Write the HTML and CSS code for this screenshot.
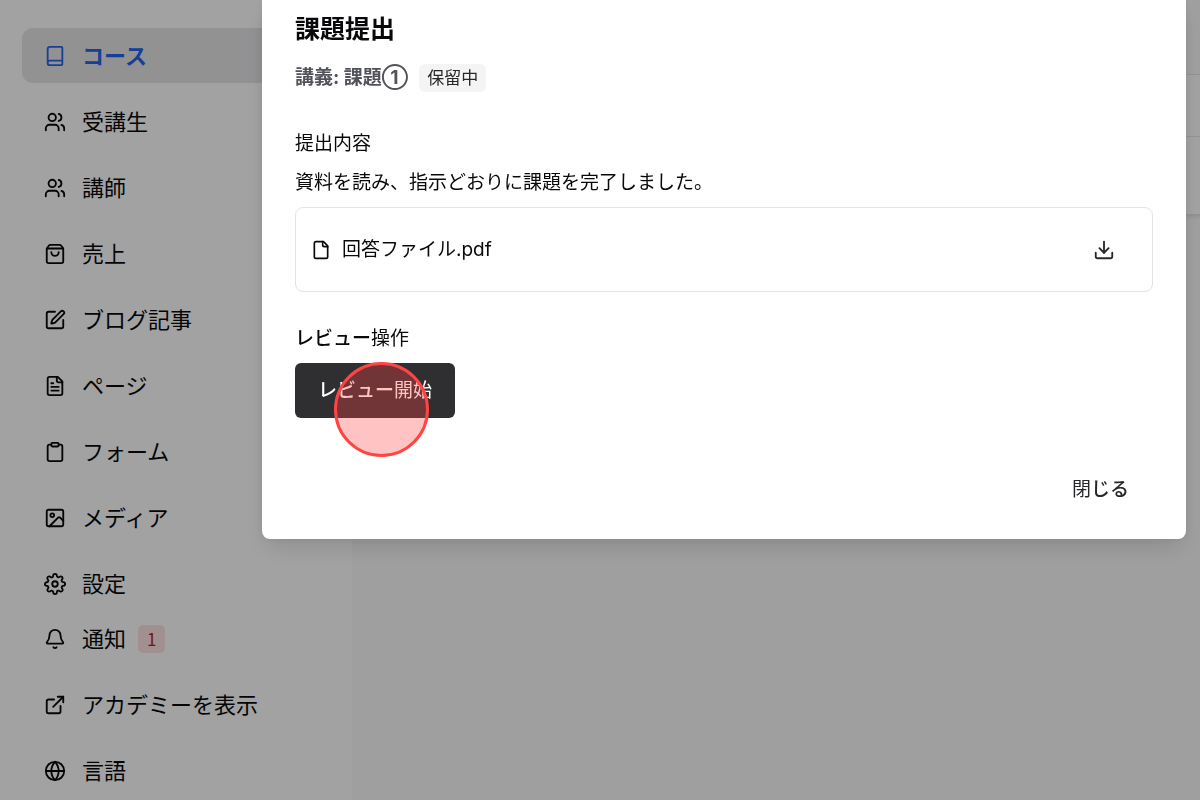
FILE: index.html
```html
<!DOCTYPE html>
<html lang="ja">
<head>
	<meta charset="UTF-8">
	<title>課題提出</title>
	<link rel="stylesheet" href="styles.css">
</head>
<body>
	<div class="layout">
		<nav class="sidebar">
			<a class="nav-item active" href="#">
				<svg class="icon" viewBox="0 0 24 24"><path d="M4 19.5v-15A2.5 2.5 0 0 1 6.500 2H19a1 1 0 0 1 1 1v18a1 1 0 0 1-1 1H6.500a2.500 2.500 0 0 1 0-5H20"/></svg>
				コース
			</a>
			<a class="nav-item" href="#">
				<svg class="icon" viewBox="0 0 24 24"><path d="M16 21v-2a4 4 0 0 0-4-4H6a4 4 0 0 0-4 4v2"/><circle cx="9" cy="7" r="4"/><path d="M22 21v-2a4 4 0 0 0-3-3.870"/><path d="M16 3.130a4 4 0 0 1 0 7.750"/></svg>
				受講生
			</a>
			<a class="nav-item" href="#">
				<svg class="icon" viewBox="0 0 24 24"><path d="M16 21v-2a4 4 0 0 0-4-4H6a4 4 0 0 0-4 4v2"/><circle cx="9" cy="7" r="4"/><path d="M22 21v-2a4 4 0 0 0-3-3.870"/><path d="M16 3.130a4 4 0 0 1 0 7.750"/></svg>
				講師
			</a>
			<a class="nav-item" href="#">
				<svg class="icon" viewBox="0 0 24 24"><path d="M16 10a4 4 0 0 1-8 0"/><path d="M3.103 6.034h17.794"/><path d="M3.400 5.467a2 2 0 0 0-.4 1.200V20a2 2 0 0 0 2 2h14a2 2 0 0 0 2-2V6.667a2 2 0 0 0-.4-1.200l-2-2.667A2 2 0 0 0 17 2H7a2 2 0 0 0-1.600.8z"/></svg>
				売上
			</a>
			<a class="nav-item" href="#">
				<svg class="icon" viewBox="0 0 24 24"><path d="M12 3H5a2 2 0 0 0-2 2v14a2 2 0 0 0 2 2h14a2 2 0 0 0 2-2v-7"/><path d="M18.375 2.625a1 1 0 0 1 3 3l-9.013 9.014a2 2 0 0 1-.853.505l-2.873.84a.5.5 0 0 1-.62-.62l.84-2.873a2 2 0 0 1 .506-.852z"/></svg>
				ブログ記事
			</a>
			<a class="nav-item" href="#">
				<svg class="icon" viewBox="0 0 24 24"><path d="M15 2H6a2 2 0 0 0-2 2v16a2 2 0 0 0 2 2h12a2 2 0 0 0 2-2V7z"/><path d="M14 2v4a2 2 0 0 0 2 2h4"/><path d="M10 9H8"/><path d="M16 13H8"/><path d="M16 17H8"/></svg>
				ページ
			</a>
			<a class="nav-item" href="#">
				<svg class="icon" viewBox="0 0 24 24"><rect x="8" y="2" width="8" height="4" rx="1"/><path d="M16 4h2a2 2 0 0 1 2 2v14a2 2 0 0 1-2 2H6a2 2 0 0 1-2-2V6a2 2 0 0 1 2-2h2"/></svg>
				フォーム
			</a>
			<a class="nav-item" href="#">
				<svg class="icon" viewBox="0 0 24 24"><rect x="3" y="3" width="18" height="18" rx="2"/><circle cx="9" cy="9" r="2"/><path d="m21 15-3.086-3.086a2 2 0 0 0-2.828 0L6 21"/></svg>
				メディア
			</a>
			<div class="nav-group">
				<a class="nav-item" href="#">
					<svg class="icon" viewBox="0 0 24 24"><circle cx="12" cy="12" r="3"/><path d="M19.400 15a1.650 1.650 0 0 0 .33 1.820l.06.06a2 2 0 0 1 0 2.830 2 2 0 0 1-2.830 0l-.06-.06a1.650 1.650 0 0 0-1.820-.33 1.650 1.650 0 0 0-1 1.510V21a2 2 0 0 1-2 2 2 2 0 0 1-2-2v-.09A1.650 1.650 0 0 0 9 19.400a1.650 1.650 0 0 0-1.820.33l-.06.06a2 2 0 0 1-2.830 0 2 2 0 0 1 0-2.830l.06-.06a1.650 1.650 0 0 0 .33-1.820 1.650 1.650 0 0 0-1.510-1H3a2 2 0 0 1-2-2 2 2 0 0 1 2-2h.09A1.650 1.650 0 0 0 4.600 9a1.650 1.650 0 0 0-.33-1.820l-.06-.06a2 2 0 0 1 0-2.830 2 2 0 0 1 2.830 0l.06.06a1.650 1.650 0 0 0 1.820.33H9a1.650 1.650 0 0 0 1-1.510V3a2 2 0 0 1 2-2 2 2 0 0 1 2 2v.09a1.650 1.650 0 0 0 1 1.510 1.650 1.650 0 0 0 1.820-.33l.06-.06a2 2 0 0 1 2.830 0 2 2 0 0 1 0 2.830l-.06.06a1.650 1.650 0 0 0-.33 1.820V9a1.650 1.650 0 0 0 1.510 1H21a2 2 0 0 1 2 2 2 2 0 0 1-2 2h-.09a1.650 1.650 0 0 0-1.510 1z"/></svg>
					設定
				</a>
				<a class="nav-item" href="#">
					<svg class="icon" viewBox="0 0 24 24"><path d="M10.268 21a2 2 0 0 0 3.464 0"/><path d="M3.262 15.326A1 1 0 0 0 4 17h16a1 1 0 0 0 .740-1.673C19.410 13.956 18 12.499 18 8A6 6 0 0 0 6 8c0 4.499-1.411 5.956-2.738 7.326"/></svg>
					通知 <span class="count">1</span>
				</a>
			</div>
			<a class="nav-item" href="#">
				<svg class="icon" viewBox="0 0 24 24"><path d="M15 3h6v6"/><path d="M10 14 21 3"/><path d="M18 13v6a2 2 0 0 1-2 2H5a2 2 0 0 1-2-2V8a2 2 0 0 1 2-2h6"/></svg>
				アカデミーを表示
			</a>
			<a class="nav-item" href="#">
				<svg class="icon" viewBox="0 0 24 24"><circle cx="12" cy="12" r="10"/><path d="M12 2a14.500 14.500 0 0 0 0 20 14.500 14.500 0 0 0 0-20"/><path d="M2 12h20"/></svg>
				言語
			</a>
		</nav>
		<main class="content">
			<div class="list">
				<div class="list-head"></div>
				<div class="list-row"></div>
				<div class="list-foot"></div>
			</div>
		</main>
	</div>

	<div class="overlay">
		<div class="modal" role="dialog" aria-labelledby="modal-title">
			<h2 class="title" id="modal-title">課題提出</h2>
			<div class="lecture">
				<span class="lecture-name">講義: 課題①</span>
				<span class="status">保留中</span>
			</div>

			<h3 class="label">提出内容</h3>
			<p class="answer">資料を読み、指示どおりに課題を完了しました。</p>
			<div class="file">
				<svg class="icon icon-file" viewBox="0 0 24 24"><path d="M15 2H6a2 2 0 0 0-2 2v16a2 2 0 0 0 2 2h12a2 2 0 0 0 2-2V7z"/><path d="M14 2v4a2 2 0 0 0 2 2h4"/></svg>
				<span class="file-name">回答ファイル.pdf</span>
				<button class="btn btn-icon" type="button" aria-label="ダウンロード">
					<svg class="icon" viewBox="0 0 24 24"><path d="M12 3v12"/><path d="m7 10 5 5 5-5"/><path d="M21 15v4a2 2 0 0 1-2 2H5a2 2 0 0 1-2-2v-4"/></svg>
				</button>
			</div>

			<h3 class="label"><span class="kana">レビュー</span>操作</h3>
			<div class="review">
				<button class="btn btn-primary" type="button"><span class="kana">レビュー</span>開始</button>
				<span class="click-mark"></span>
			</div>

			<div class="modal-foot">
				<button class="btn" type="button">閉<span class="kana">じる</span></button>
			</div>
		</div>
	</div>
</body>
</html>
```
FILE: styles.css
```css
* {
	box-sizing: border-box;
}
body {
	margin: 0;
	font-family: Inter, "Noto Sans CJK JP", sans-serif;
	font-size: 19px;
	line-height: 28px;
	color: #09090b;
	background: #f9f9f9;
	overflow: hidden;
}
h2, h3, p {
	margin: 0;
}
.layout {
	display: flex;
	height: 100vh;
}

/* sidebar */
.sidebar {
	flex: none;
	display: flex;
	flex-direction: column;
	gap: 11px;
	width: 352px;
	padding: 28px 22px 0;
	background: #fdfdfd;
}
.nav-item {
	flex: none;
	display: flex;
	align-items: center;
	gap: 16px;
	height: 55px;
	padding: 0 22px;
	border-radius: 11px;
	font-size: 22px;
	color: #09090b;
	text-decoration: none;
}
.nav-item.active {
	font-weight: 700;
	color: #2563eb;
	background: #e4e4e7;
}
.icon {
	flex: none;
	width: 22px;
	height: 22px;
	fill: none;
	stroke: currentColor;
	stroke-width: 2;
	stroke-linecap: round;
	stroke-linejoin: round;
}
.count {
	margin-left: -4px;
	padding: 0 9px;
	border-radius: 5px;
	font-family: "Noto Sans CJK JP", sans-serif;
	font-size: 17px;
	color: #b91c1c;
	background: #fee2e2;
}

/* page behind the dialog */
.content {
	flex: 1;
	padding-left: 44px;
}
.list {
	background: #fdfdfd;
	border-bottom: 1px solid #e4e4e7;
	box-shadow: 0 2px 4px rgba(0, 0, 0, .1);
}
.list-head {
	height: 75px;
	background: #f9f9f9;
	border-bottom: 1px solid #e4e4e7;
}
.list-row {
	height: 62px;
	border-bottom: 1px solid #e4e4e7;
}
.list-foot {
	height: 77px;
}

/* dialog */
.overlay {
	position: fixed;
	inset: 0;
	padding: 0 14px 0 262px;
	background: rgba(0, 0, 0, .36);
}
.modal {
	padding: 11px 33px 22px;
	border-radius: 0 0 8px 8px;
	background: #fff;
	box-shadow: 0 12px 24px -4px rgba(0, 0, 0, .12), 0 0 12px rgba(0, 0, 0, .06);
}
.title {
	font-size: 25px;
	line-height: 36px;
}
.lecture {
	display: flex;
	align-items: center;
	gap: 11px;
	margin: 17px 0 38px;
}
.lecture-name {
	font-weight: 700;
	color: #52525b;
}
.status {
	padding: 0 8px;
	border-radius: 6px;
	font-size: 17px;
	color: #27272a;
	background: #f4f4f5;
}
.label {
	font-size: 19px;
	font-weight: 400;
}
.kana {
	font-weight: 500;
}
.answer {
	margin: 11px 0 10px;
}
.file {
	display: flex;
	align-items: center;
	gap: 11px;
	height: 85px;
	margin-bottom: 33px;
	padding: 0 15px;
	border: 1px solid #e4e4e7;
	border-radius: 8px;
}
.icon-file {
	width: 20px;
	height: 20px;
}
.file-name {
	flex: 1;
}
.btn {
	height: 55px;
	padding: 0 24px;
	border: 0;
	border-radius: 6px;
	font: inherit;
	color: #27272a;
	background: none;
	cursor: pointer;
}
.btn-icon {
	display: flex;
	align-items: center;
	padding: 0 22px;
}
.btn-primary {
	padding: 0 23px;
	color: #fff;
	background: #2f2f31;
}
.review {
	position: relative;
	margin: 10px 0 44px;
	line-height: 0;
}
.click-mark {
	position: absolute;
	top: -1px;
	left: 39px;
	width: 95px;
	height: 95px;
	border: 3px solid #ff4444;
	border-radius: 50%;
	background: rgba(255, 68, 68, .32);
	pointer-events: none;
}
.modal-foot {
	display: flex;
	justify-content: flex-end;
}
```
